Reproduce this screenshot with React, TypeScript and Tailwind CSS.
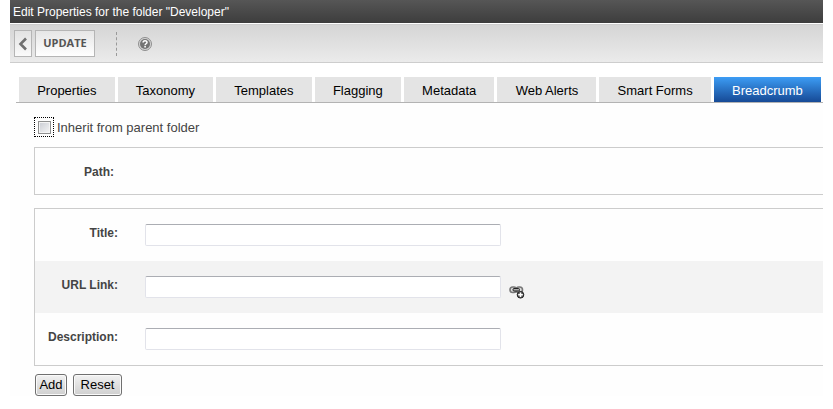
import { useState } from 'react';

const tabs = [
  'Properties',
  'Taxonomy',
  'Templates',
  'Flagging',
  'Metadata',
  'Web Alerts',
  'Smart Forms',
  'Breadcrumb',
];

const fields = [
  { id: 'title', label: 'Title:' },
  { id: 'url', label: 'URL Link:', hasPicker: true },
  { id: 'description', label: 'Description:' },
];

const BackIcon = () => (
  <svg width="10" height="14" viewBox="0 0 10 14" fill="none" aria-hidden="true">
    <path d="M8 1.500 2.500 7 8 12.500" stroke="#707070" strokeWidth="2.600" />
  </svg>
);

const HelpIcon = () => (
  <svg width="14" height="14" viewBox="0 0 14 14" fill="none" aria-hidden="true">
    <circle cx="7" cy="7" r="6.500" fill="#d4d4d4" stroke="#8e8e8e" />
    <circle cx="7" cy="7" r="5" fill="#747474" />
    <path
      d="M5.100 5.600c0-2.500 3.900-2.500 3.900-.2C9 6.800 7.100 6.700 7.100 8.200"
      stroke="#fff"
      strokeWidth="1.500"
    />
    <path d="M6.300 9.100h1.600v1.500H6.300z" fill="#fff" />
  </svg>
);

const LinkAddIcon = () => (
  <svg width="16" height="13" viewBox="0 0 16 13" fill="none" aria-hidden="true">
    <rect x="1" y="1" width="6.500" height="5.500" rx="2.700" fill="#ddd" stroke="#777" strokeWidth="1.600" />
    <rect x="7" y="1" width="6.500" height="5.500" rx="2.700" fill="#ddd" stroke="#777" strokeWidth="1.600" />
    <rect x="4" y="2.500" width="6.500" height="2.500" rx="1" fill="#aaa" stroke="#222" />
    <circle cx="11.500" cy="8.800" r="3.300" fill="#555" stroke="#222" />
    <path d="M11.500 6.500v4.600M9.200 8.800h4.600" stroke="#fff" strokeWidth="1.500" />
  </svg>
);

const Toolbar = () => (
  <div className="mt-px flex h-[39px] items-center border-y border-[#cdcdcd] bg-linear-to-b from-[#d5d5d5] to-[#ebebeb] px-1">
    <button
      type="button"
      aria-label="Back"
      className="flex h-[27px] w-[18px] items-center justify-center border border-[#b5b5b5] bg-linear-to-b from-[#e2e2e2] to-[#fafafa]"
    >
      <BackIcon />
    </button>
    <button
      type="button"
      className="ml-[3px] h-[27px] w-[60px] border border-[#b5b5b5] bg-linear-to-b from-[#e6e6e6] to-white font-['Open_Sans',sans-serif] text-[11px] font-bold text-[#555]"
    >
      UPDATE
    </button>
    <div className="ml-[21px] h-6 border-l border-dashed border-[#999]" />
    <button type="button" aria-label="Help" className="ml-[21px]">
      <HelpIcon />
    </button>
  </div>
);

const TabBar = ({
  active,
  onSelect,
}: {
  active: string;
  onSelect: (tab: string) => void;
}) => (
  <div className="ml-1.5 mt-3.5 border-b border-[#b3b3b3] pl-[3px] pr-0.5">
    <div role="tablist" className="flex gap-[3px]">
      {tabs.map((tab) => (
        <button
          key={tab}
          type="button"
          role="tab"
          aria-selected={tab === active}
          onClick={() => onSelect(tab)}
          className={`h-[25px] grow px-[17px] pt-0.5 text-[13px] whitespace-nowrap ${
            tab === active
              ? 'bg-linear-to-b from-[#3d9df5] to-[#174a96] text-white'
              : 'bg-[#e4e4e4] text-black'
          }`}
        >
          {tab}
        </button>
      ))}
    </div>
  </div>
);

const App = () => {
  const [active, setActive] = useState('Breadcrumb');

  return (
    <div className="min-h-screen bg-white px-2.5 font-['Liberation_Sans',Arial,sans-serif]">
      <h1 className="h-[23px] bg-linear-to-b from-[#565656] to-[#3d3d3d] px-[3px] text-[12px] leading-6 text-white">
        Edit Properties for the folder "Developer"
      </h1>
      <Toolbar />
      <TabBar active={active} onSelect={setActive} />

      <form className="bg-[#fefefe] pl-6 pt-3.5" onSubmit={(e) => e.preventDefault()}>
        <div className="flex items-center gap-[3px]">
          <span className="flex size-5 items-center justify-center border border-dotted border-black">
            <input
              id="inherit"
              type="checkbox"
              className="size-[13px] appearance-none border border-[#8e8f8f] bg-linear-to-br from-[#c9ccd3] to-[#f6f6f6] shadow-[inset_0_0_0_1px_#f4f4f4] checked:from-[#4b6ea9] checked:to-[#4b6ea9]"
            />
          </span>
          <label htmlFor="inherit" className="pt-0.5 text-[13px] leading-[18px] text-[#444]">
            Inherit from parent folder
          </label>
        </div>

        <div className="mt-2.5 h-12 border border-r-0 border-[#ccc] text-[12px] font-bold text-[#444]">
          <div className="w-[79px] pt-4 text-right leading-4">Path:</div>
        </div>

        <div className="mt-[13px] border border-r-0 border-[#ccc]">
          {fields.map((field) => (
            <div key={field.id} className="flex h-[52px] items-start pt-[15px] even:bg-[#f3f3f3]">
              <label
                htmlFor={field.id}
                className="w-[83px] text-right text-[12px] leading-[18px] font-bold text-[#444]"
              >
                {field.label}
              </label>
              <input
                id={field.id}
                type="text"
                className="ml-[27px] h-[22px] w-[356px] rounded-[2px] border border-[#e2e3ea] border-t-[#abadb3] bg-white px-1 text-[12px]"
              />
              {field.hasPicker && (
                <button type="button" aria-label="Select link" className="ml-2 self-start pt-2.5">
                  <LinkAddIcon />
                </button>
              )}
            </div>
          ))}
        </div>

        <div className="flex gap-1.5 pl-px pt-2">
          <button
            type="submit"
            className="h-[22px] w-8 rounded-[3px] border border-[#707070] bg-linear-to-b from-[#f2f2f2] to-[#cfcfcf] text-[13px] leading-5 text-black shadow-[inset_0_0_0_1px_#fafafa]"
          >
            Add
          </button>
          <button
            type="reset"
            className="h-[22px] w-[49px] rounded-[3px] border border-[#707070] bg-linear-to-b from-[#f2f2f2] to-[#cfcfcf] text-[13px] leading-5 text-black shadow-[inset_0_0_0_1px_#fafafa]"
          >
            Reset
          </button>
        </div>
      </form>
    </div>
  );
};

export default App;
